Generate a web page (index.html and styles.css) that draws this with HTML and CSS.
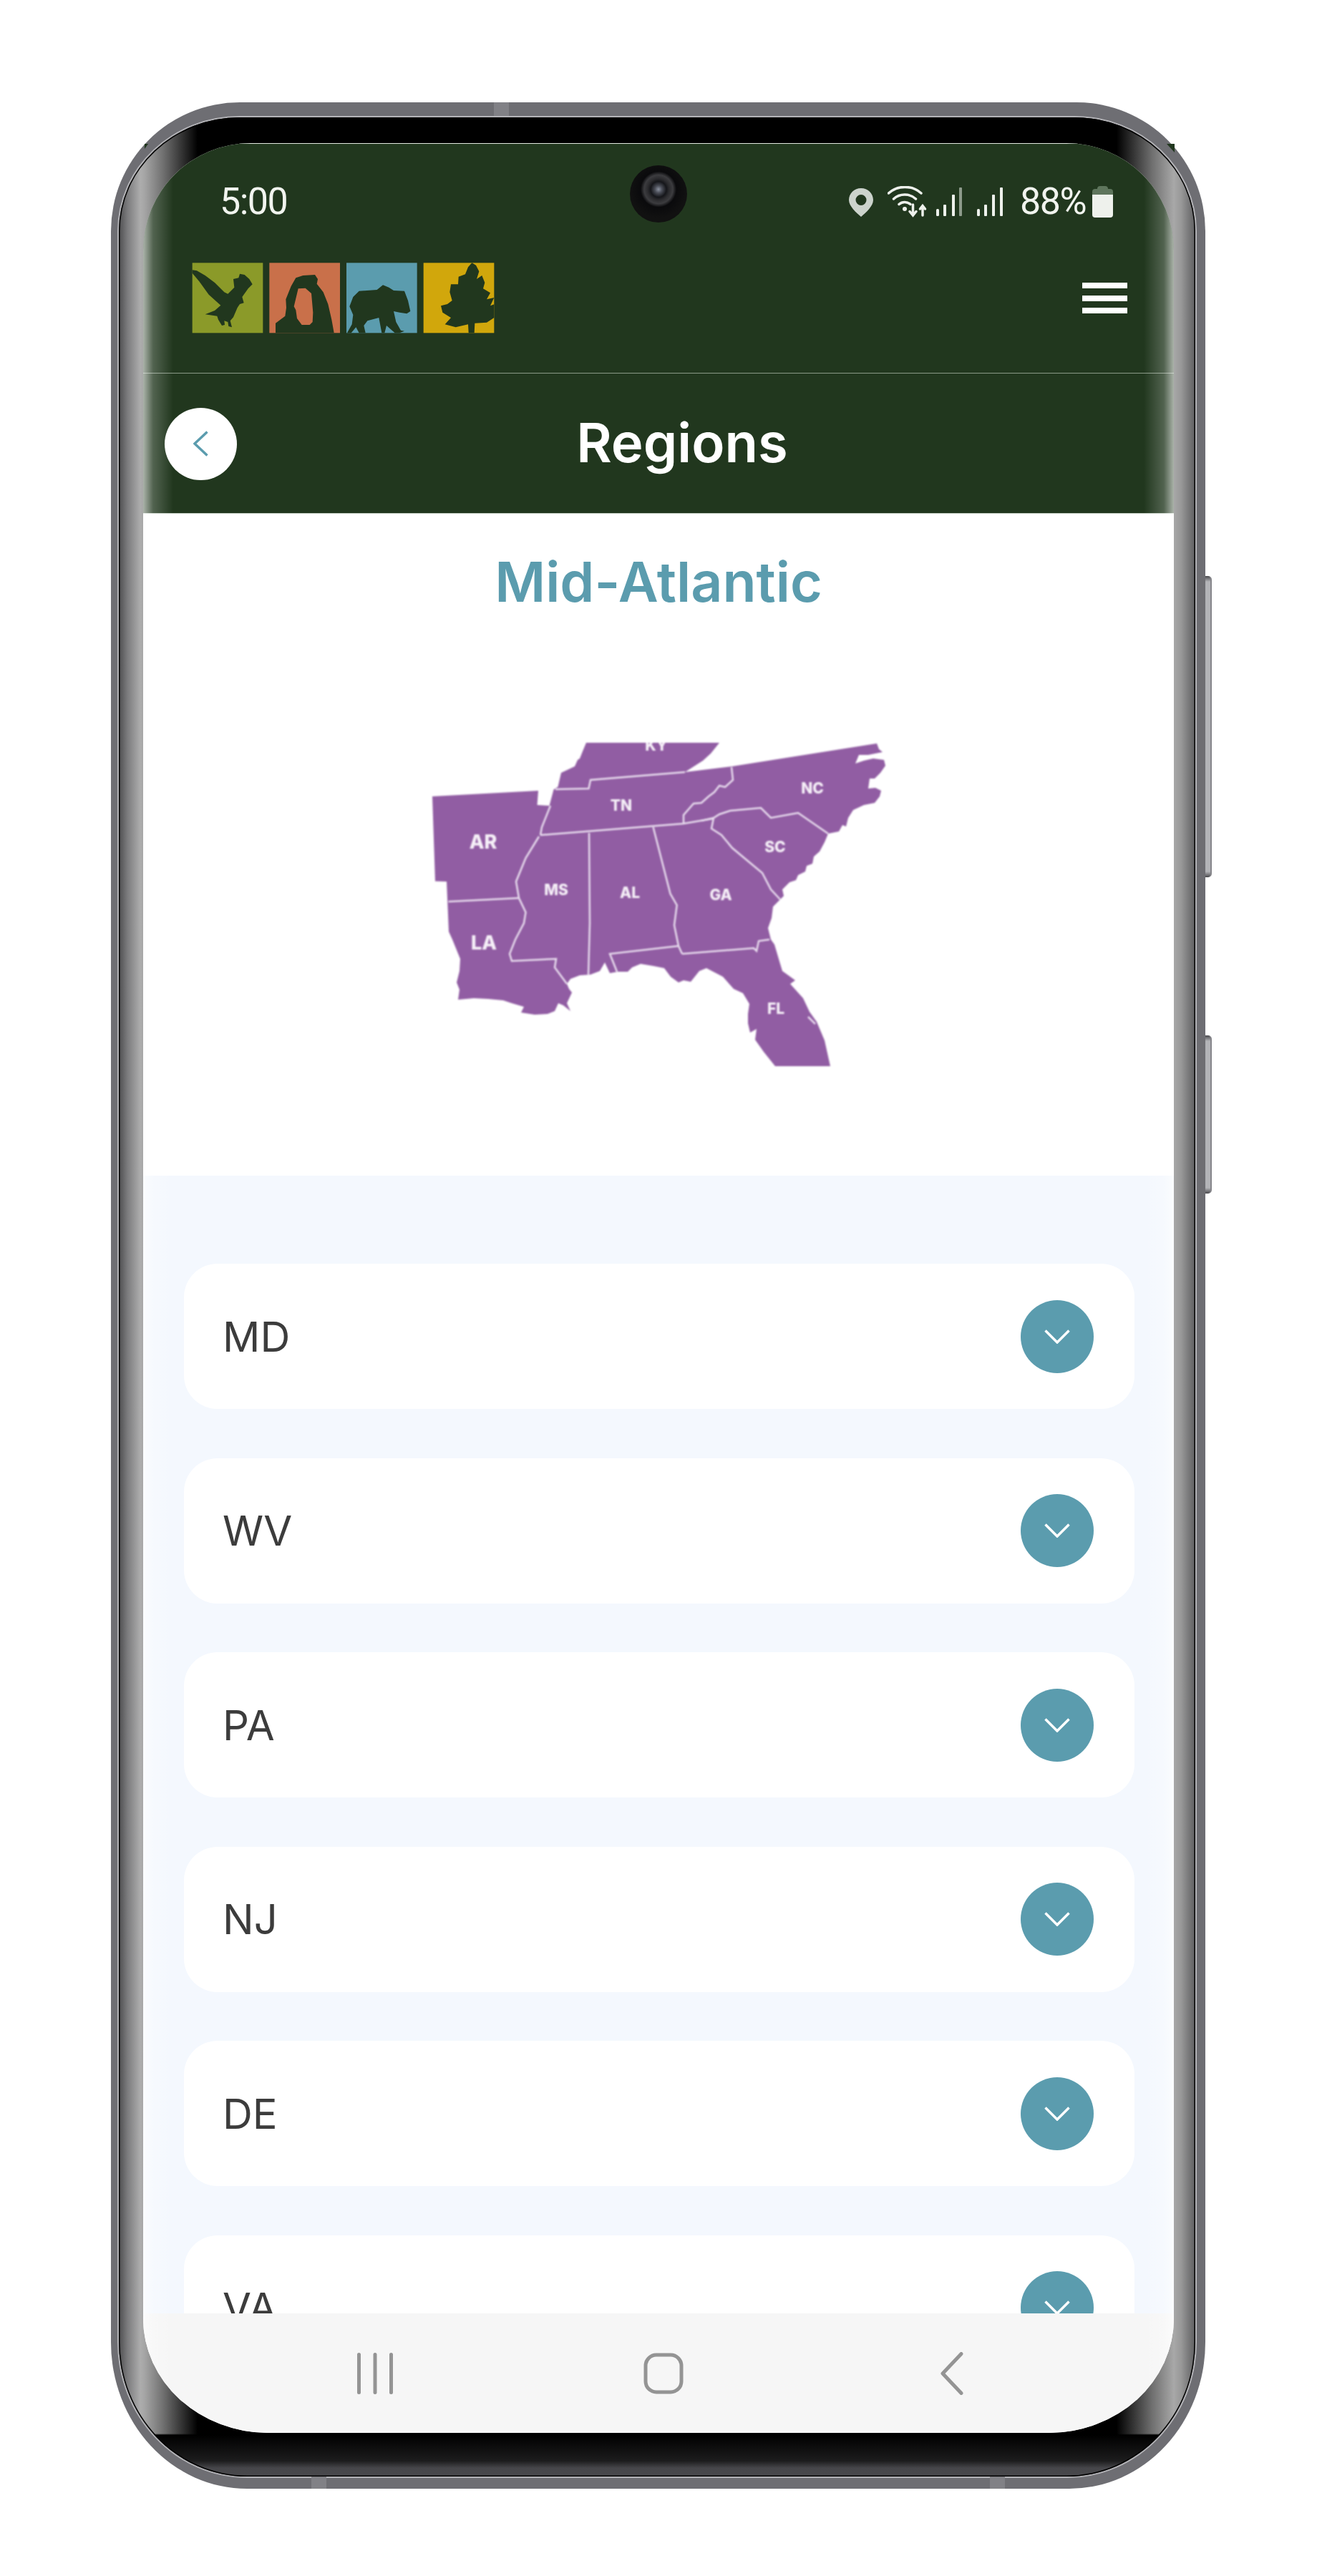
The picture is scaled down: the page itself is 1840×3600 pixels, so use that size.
FILE: index.html
```html
<!DOCTYPE html>
<html lang="en">
<head>
<meta charset="utf-8">
<title>Regions</title>
<link rel="stylesheet" href="styles.css">
</head>
<body>
<div class="stage">
  <div class="phone">
    <span class="band band-top"></span>
    <span class="band band-bl"></span>
    <span class="band band-br"></span>
    <span class="side side-power"></span>
    <span class="side side-vol"></span>
    <span class="nick nick-left"></span>
    <span class="nick nick-right"></span>
    <div class="rim">
      <div class="bezel">
        <div class="screen">
          <div class="camera"></div>
          <header class="header">
            <div class="status">
              <span class="time">5:00</span>
              <div class="status-icons">
                <svg class="ic-pin" viewBox="0 0 34 40"><path fill-rule="evenodd" d="M17 0C7.600 0 0 7.300 0 16.500 0 25 10 34 17 40 24 34 34 25 34 16.500 34 7.300 26.400 0 17 0ZM17 9A7.500 7.500 0 1 1 17 24 7.500 7.500 0 0 1 17 9Z"/></svg>
                <svg class="ic-wifi" viewBox="0 0 55 44"><g fill="none" stroke-linecap="round"><path d="M1.500 10C14 -1.500 34 -1.500 47 10"/><path d="M8.500 18C17 10 31 10 39.500 18"/><path d="M16 25.500C20.500 21.500 27.500 21.500 32 25.500"/><path d="M35.500 26V40M31 35.500L35.500 41 40 35.500"/><path d="M49 41V28M45.500 32L49 27.500 52.500 32"/></g><circle cx="24" cy="32" r="3"/></svg>
                <svg class="ic-sig" viewBox="0 0 37 44"><rect x="0" y="32" width="4" height="10" rx="1.500"/><rect x="10" y="26" width="4" height="16" rx="1"/><rect x="22" y="12" width="4" height="30" rx="1"/><rect class="dim" x="32" y="2" width="4" height="40" rx="1"/></svg>
                <svg class="ic-sig ic-sig2" viewBox="0 0 37 44"><rect x="0" y="32" width="4" height="10" rx="1.500"/><rect x="10" y="26" width="4" height="16" rx="1"/><rect x="21" y="12" width="4" height="30" rx="1"/><rect x="32" y="2" width="4" height="40" rx="1"/></svg>
                <span class="pct">88%</span>
                <svg class="ic-batt" viewBox="0 0 29 44"><path class="batt-top" d="M7 4Q7 0 11 0H18Q22 0 22 4H25Q29 4 29 8V14H0V8Q0 4 4 4Z"/><path class="batt-body" d="M0 12H29V40Q29 44 25 44H4Q0 44 0 40Z"/></svg>
              </div>
            </div>
            <div class="brand">
              <svg class="logo" viewBox="0 0 1410 480">
                <rect x="56" y="82" width="296" height="294" fill="#8b9a29"/>
                <rect x="379" y="82" width="296" height="294" fill="#c9704a"/>
                <rect x="702" y="82" width="296" height="294" fill="#5b9cae"/>
                <rect x="1025" y="82" width="296" height="294" fill="#d1a70c"/>
                <g class="logo-ink">
                  <path d="M56 112L75 115 110 135 150 165 190 205 205 212 232 185 228 150 250 145 255 128 275 132 295 150 308 172 290 190 265 225 272 250 255 255 245 270 228 310 215 325 222 352 208 348 205 330 190 325 192 342 180 345 165 320 160 305 110 298 150 282 175 260 125 215 85 160 56 125Z"/>
                  <path fill-rule="evenodd" d="M405 376L405 335 445 305 450 270 448 235 470 180 490 145 520 135 570 132 582 150 578 170 605 205 625 255 640 320 650 376ZM500 190L530 188 555 210 562 290 560 330 548 342 515 342 495 315 490 280 482 265Z"/>
                  <path d="M705 376L725 340 730 300 715 265 730 225 755 200 830 195 855 175 880 185 900 198 945 200 960 240 970 285 955 295 925 290 900 285 910 330 930 365 945 368 925 376 905 376 870 345 862 376 850 376 838 312 790 325 775 345 782 376 755 376 742 352 722 376Z"/>
                  <path d="M1228 82L1245 92 1258 118 1248 150 1270 135 1282 165 1275 190 1305 208 1290 235 1321 228 1305 262 1321 256 1321 312 1290 332 1240 335 1238 376 1214 376 1212 340 1160 352 1115 340 1140 312 1105 290 1098 262 1125 255 1145 240 1135 205 1140 172 1170 172 1172 140 1200 130 1212 100Z"/>
                </g>
              </svg>
              <div class="burger"><span></span><span></span><span></span></div>
            </div>
            <div class="titlebar">
              <button class="back" type="button"><svg viewBox="0 0 21 36"><path d="M19.500 1.500L2 18 19.500 34.500"/></svg></button>
              <h1 class="page-title">Regions</h1>
            </div>
          </header>
          <main class="main">
            <h2 class="region">Mid-Atlantic</h2>
            <svg class="map" viewBox="0 0 720 520">
              <defs><clipPath id="mapclip"><rect x="0" y="38" width="720" height="452"/></clipPath></defs>
              <path class="land" d="M44 113L192 105 190.500 125 207.500 126 213.500 103.500 219.500 99.500 224 80 243 71 247 62 250 60 254 50 259 38 445 38 433 53 422 63 397 79 463 71 665 39 668 47 673 51 653 55 640 55 635 67 647 63 660 60 675 62 677 70 670 80 662 88 655 88 653 102 663 101 671 105 669 113 662 122 647 125 632 132 625 143 622 155 617 153 612 162 597 165 592 177 585 190 577 197 575 207 567 210 565 218 555 223 552 230 543 233 533 243 535 252 530 257 520 267 518 283 513 297 517 313 522 320 530 347 533 357 551 370 544 375 562 395 571 414 581 428 592 454 600 490 523 490 515 480 507 470 495 453 497 438 488 443 485 430 485 417 487 403 478 388 465 382 450 365 427 353 417 357 405 372 395 370 388 373 377 365 368 353 353 350 335 347 323 352 317 358 303 358 292 360 285 345 278 357 265 362 250 363 237 368 232 375 235 382 239 387 232 402 237 413 227 405 220 402 215 413 205 417 187 418 168 415 172 407 155 402 143 398 122 396 102 395 80 397 82 383 78 373 82 357 83 340 72 313 67 302 64 232 48 231.500Z"/>
              <g class="borders">
                <path d="M216 103L262.500 102 265 90 397 79"/>
                <path d="M462 72L464 90 453 100 445 98 438 107 430 113 420 122 409 123 395 139 395 151"/>
                <path d="M195 167L395 151 436 144"/>
                <path d="M209 126L197 156 195 167"/>
                <path d="M193 169L174.500 199 161 232 165 255 174.500 275 172 290 160 313 152 333 155 343 217 340 215 352 232 375"/>
                <path d="M66.500 260L165 255"/>
                <path d="M263 164L264 290 262 362"/>
                <path d="M352.600 156L376.500 249 385.700 265 382 293 388 322 393 333"/>
                <path d="M393 333L493 325 497 329 500 315 515 313"/>
                <path d="M388 322L292 333 302 358"/>
                <path d="M420 147L437 143 445 138 460 133 503 129 517 143 555 136 597 165"/>
                <path d="M437 143L434 158 448 167 463 185 505 220 517 243 530 257"/>
                <path d="M569 421L579 431"/>
              </g>
              <g class="labels">
                <text class="big" x="115" y="186">AR</text>
                <text class="big" x="116" y="327">LA</text>
                <text x="308" y="133">TN</text>
                <text x="575" y="109">NC</text>
                <text x="523" y="191">SC</text>
                <text x="217" y="251">MS</text>
                <text x="320" y="255">AL</text>
                <text x="447" y="258">GA</text>
                <text x="524" y="417">FL</text>
                <g clip-path="url(#mapclip)"><text x="357" y="49">KY</text></g>
              </g>
            </svg>
            <section class="panel">
              <div class="card"><span class="state">MD</span><button class="toggle" type="button"><svg viewBox="0 0 36 20"><path d="M1.500 1.500L18 18 34.500 1.500"/></svg></button></div>
              <div class="card"><span class="state">WV</span><button class="toggle" type="button"><svg viewBox="0 0 36 20"><path d="M1.500 1.500L18 18 34.500 1.500"/></svg></button></div>
              <div class="card"><span class="state">PA</span><button class="toggle" type="button"><svg viewBox="0 0 36 20"><path d="M1.500 1.500L18 18 34.500 1.500"/></svg></button></div>
              <div class="card"><span class="state">NJ</span><button class="toggle" type="button"><svg viewBox="0 0 36 20"><path d="M1.500 1.500L18 18 34.500 1.500"/></svg></button></div>
              <div class="card"><span class="state">DE</span><button class="toggle" type="button"><svg viewBox="0 0 36 20"><path d="M1.500 1.500L18 18 34.500 1.500"/></svg></button></div>
              <div class="card"><span class="state">VA</span><button class="toggle" type="button"><svg viewBox="0 0 36 20"><path d="M1.500 1.500L18 18 34.500 1.500"/></svg></button></div>
            </section>
          </main>
          <nav class="softkeys">
            <svg class="key" viewBox="0 0 60 60"><path d="M7.500 3.500V56.500M30 3.500V56.500M52.500 3.500V56.500"/></svg>
            <svg class="key" viewBox="0 0 60 60"><rect x="5" y="4" width="50" height="52" rx="15"/></svg>
            <svg class="key" viewBox="0 0 60 60"><path d="M43 2.500L17 30 43 57.500"/></svg>
          </nav>
        </div>
      </div>
    </div>
  </div>
</div>
</body>
</html>
```
FILE: styles.css
```css
* { box-sizing: border-box; }
html, body { margin: 0; background: #fff; }
body { height: 3600px; overflow: hidden; font-family: "Inter", "Liberation Sans", sans-serif; }
.stage { padding: 143px 0 0 155px; }

.phone {
  position: relative;
  width: 1529px;
  height: 3335px;
  padding: 19px 12px 15px 9px;
  border-radius: 180px 180px 190px 190px / 180px 180px 205px 205px;
  background: #6e6e73;
}
.band { position: absolute; width: 21px; background: #818186; }
.band-top { left: 535px; top: 0; height: 19px; }
.band-bl { left: 280px; bottom: 0; height: 17px; }
.band-br { left: 1228px; bottom: 0; height: 17px; }
.side {
  position: absolute;
  left: 100%;
  width: 9px;
  border-radius: 0 5px 5px 0;
  background: linear-gradient(180deg, #47474b 0, #b3b4b8 8px, #b3b4b8 calc(100% - 8px), #47474b 100%);
  border-right: 2px solid #85858a;
}
.side-power { top: 662px; height: 421px; }
.side-vol { top: 1304px; height: 221px; }
.nick { position: absolute; z-index: 1; top: 58px; background: #21371e; }
.nick-left { left: 47px; width: 5px; height: 7px; clip-path: polygon(0 0, 100% 0, 0 100%); }
.nick-right { left: 1475px; width: 11px; height: 12px; clip-path: polygon(0 0, 100% 0, 100% 100%); }

.rim {
  height: 100%;
  border: 2px solid #b4b4b8;
  border-radius: 171px 171px 181px 181px / 161px 161px 190px 190px;
  background: #000;
}
.bezel {
  height: 100%;
  padding: 36px 30px 61px 34px;
  border-radius: 169px 169px 179px 179px / 159px 159px 188px 188px;
  box-shadow: inset 0 0 0 1.500px #000;
  background:
    linear-gradient(0deg, #49494c 0, #46464a 12px, #1c1c1d 22px, #000 58px, transparent 60px) bottom / 100% 62px no-repeat,
    linear-gradient(90deg, #4d4d4f 0, #7b7b7d 12px, #adadad 30px, #a5a5a5 36px, #707070 62px, #000 110px, #000 calc(100% - 110px), #707070 calc(100% - 60px), #a8a8a8 calc(100% - 30px), #999 calc(100% - 20px), #5e5e60 100%);
}
.screen {
  position: relative;
  display: flex;
  flex-direction: column;
  width: 1440px;
  height: 3200px;
  overflow: hidden;
  border-radius: 150px 150px 175px 175px / 150px 150px 160px 160px;
  background: #fff;
}
.screen::after {
  content: "";
  position: absolute;
  inset: 0;
  pointer-events: none;
  background:
    linear-gradient(90deg, rgba(255,255,255,.62) 0, rgba(255,255,255,.22) 14px, rgba(255,255,255,0) 42px) left / 60px 100% no-repeat,
    linear-gradient(270deg, rgba(255,255,255,.62) 0, rgba(255,255,255,.22) 14px, rgba(255,255,255,0) 42px) right / 60px 100% no-repeat;
}
.camera {
  position: absolute;
  z-index: 2;
  left: 680px;
  top: 31px;
  width: 80px;
  height: 80px;
  border-radius: 50%;
  background:
    radial-gradient(circle at 50% 42%, #8b92a0 0, #4a4d57 5px, #15161a 11px, #2b2b2e 15px, #3c3c3f 20px, #0a0a0c 25px, #111 40px);
}

.header {
  flex: none;
  height: 518px;
  background: #21371e;
  border-top: 1px solid #e2e8e1;
  border-bottom: 1px solid #c5d0c4;
  color: #fff;
}
.status {
  display: flex;
  justify-content: space-between;
  height: 139px;
  padding: 59px 85px 0 107px;
}
.time, .pct {
  font-family: "Roboto", "Liberation Sans", sans-serif;
  font-size: 52px;
  letter-spacing: -1.500px;
  line-height: 44px;
  color: #f1f4ef;
}
.status-icons { display: flex; align-items: flex-start; height: 44px; }
.status-icons svg { display: block; height: 44px; fill: #eef1ec; stroke: #eef1ec; stroke-width: 0; }
.ic-pin { width: 34px; padding-top: 2px; fill: #ccd3cc !important; }
.ic-wifi { width: 55px; margin-left: 20px; }
.ic-wifi path { stroke-width: 3.500px; }
.ic-sig { width: 37px; margin-left: 13px; }
.ic-sig2 { margin-left: 20px; }
.ic-sig .dim { fill: #8d9a8b; }
.pct { margin-left: 23px; }
.ic-batt { width: 29px; margin-left: 9px; }
.batt-top { fill: #5e755c; }
.batt-body { fill: #eef1ec; }

.brand {
  display: flex;
  justify-content: space-between;
  align-items: flex-start;
  height: 182px;
  padding: 0 65px 0 50px;
  border-bottom: 1px solid #8a9a88;
}
.logo { display: block; width: 470px; height: 160px; filter: blur(.4px); }
.logo-ink { fill: #21371e; }
.burger { display: flex; flex-direction: column; gap: 9.500px; margin-top: 55px; }
.burger span { display: block; width: 63px; height: 8px; background: #fff; }

.titlebar { display: flex; align-items: center; height: 196px; padding-left: 30px; }
.back {
  flex: none;
  display: flex;
  align-items: center;
  justify-content: center;
  width: 101px;
  height: 101px;
  padding: 0;
  border: 0;
  border-radius: 50%;
  background: #fff;
}
.back svg { width: 21px; height: 36px; fill: none; stroke: #5b9cae; stroke-width: 3.500; }
.page-title {
  flex: 1;
  margin: 0;
  padding: 0 65px 4px 0;
  text-align: center;
  font-size: 76px;
  font-weight: 600;
  line-height: 100px;
  color: #fff;
}

.main { flex: 1; min-height: 0; overflow: hidden; background: #fff; }
.region {
  margin: 45px 0 0;
  text-align: center;
  font-size: 77px;
  font-weight: 600;
  line-height: 100px;
  color: #5b9cae;
}
.map { display: block; width: 720px; height: 520px; margin: 137px auto 0; filter: blur(.9px); }
.land { fill: #915da3; }
.borders { fill: none; }
.borders path { stroke: #e8dcee; stroke-width: 2.500px; }
.labels text { font-family: "Inter", "Liberation Sans", sans-serif; font-weight: 800; font-size: 21px; text-anchor: middle; fill: #f6f0f8; }
.labels .big { font-size: 27px; }

.panel {
  display: flex;
  flex-direction: column;
  gap: 68.500px;
  margin-top: 123px;
  padding: 123px 55px 0 57px;
  background: #f4f8fe;
}
.card {
  flex: none;
  display: flex;
  align-items: center;
  justify-content: space-between;
  height: 203px;
  padding: 0 57px 0 54px;
  border-radius: 47px;
  background: #fff;
}
.state { font-size: 58px; line-height: 70px; color: #3c3c3c; }
.toggle {
  flex: none;
  display: flex;
  align-items: center;
  justify-content: center;
  width: 102px;
  height: 102px;
  padding: 0;
  border: 0;
  border-radius: 50%;
  background: #5b9cae;
}
.toggle svg { width: 36px; height: 20px; fill: none; stroke: #fff; stroke-width: 3.500; }

.softkeys {
  flex: none;
  display: grid;
  grid-template-columns: repeat(3, 403px);
  justify-items: center;
  align-items: center;
  height: 167px;
  padding-left: 122px;
  background: #f6f6f6;
}
.key { width: 60px; height: 60px; fill: none; stroke: #949494; stroke-width: 5; stroke-linecap: round; stroke-linejoin: round; }
```
